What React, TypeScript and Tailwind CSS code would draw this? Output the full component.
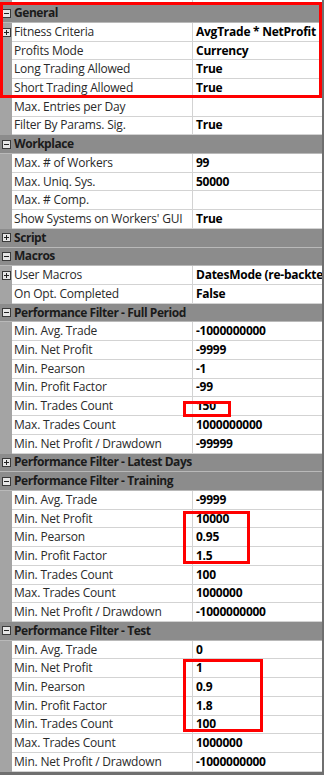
import React from 'react';

type Item =
  | { kind: 'group'; title: string; open: boolean }
  | { kind: 'row'; label: string; value?: string; sub?: boolean };

const items: Item[] = [
  { kind: 'group', title: 'General', open: true },
  { kind: 'row', label: 'Fitness Criteria', value: 'AvgTrade * NetProfit', sub: true },
  { kind: 'row', label: 'Profits Mode', value: 'Currency' },
  { kind: 'row', label: 'Long Trading Allowed', value: 'True' },
  { kind: 'row', label: 'Short Trading Allowed', value: 'True' },
  { kind: 'row', label: 'Max. Entries per Day' },
  { kind: 'row', label: 'Filter By Params. Sig.', value: 'True' },
  { kind: 'group', title: 'Workplace', open: true },
  { kind: 'row', label: 'Max. # of Workers', value: '99' },
  { kind: 'row', label: 'Max. Uniq. Sys.', value: '50000' },
  { kind: 'row', label: 'Max. # Comp.' },
  { kind: 'row', label: "Show Systems on Workers' GUI", value: 'True' },
  { kind: 'group', title: 'Script', open: false },
  { kind: 'group', title: 'Macros', open: true },
  { kind: 'row', label: 'User Macros', value: 'DatesMode (re-backtes', sub: true },
  { kind: 'row', label: 'On Opt. Completed', value: 'False' },
  { kind: 'group', title: 'Performance Filter - Full Period', open: true },
  { kind: 'row', label: 'Min. Avg. Trade', value: '-1000000000' },
  { kind: 'row', label: 'Min. Net Profit', value: '-9999' },
  { kind: 'row', label: 'Min. Pearson', value: '-1' },
  { kind: 'row', label: 'Min. Profit Factor', value: '-99' },
  { kind: 'row', label: 'Min. Trades Count', value: '150' },
  { kind: 'row', label: 'Max. Trades Count', value: '1000000000' },
  { kind: 'row', label: 'Min. Net Profit / Drawdown', value: '-99999' },
  { kind: 'group', title: 'Performance Filter - Latest Days', open: false },
  { kind: 'group', title: 'Performance Filter - Training', open: true },
  { kind: 'row', label: 'Min. Avg. Trade', value: '-9999' },
  { kind: 'row', label: 'Min. Net Profit', value: '10000' },
  { kind: 'row', label: 'Min. Pearson', value: '0.95' },
  { kind: 'row', label: 'Min. Profit Factor', value: '1.5' },
  { kind: 'row', label: 'Min. Trades Count', value: '100' },
  { kind: 'row', label: 'Max. Trades Count', value: '1000000' },
  { kind: 'row', label: 'Min. Net Profit / Drawdown', value: '-1000000000' },
  { kind: 'group', title: 'Performance Filter - Test', open: true },
  { kind: 'row', label: 'Min. Avg. Trade', value: '0' },
  { kind: 'row', label: 'Min. Net Profit', value: '1' },
  { kind: 'row', label: 'Min. Pearson', value: '0.9' },
  { kind: 'row', label: 'Min. Profit Factor', value: '1.8' },
  { kind: 'row', label: 'Min. Trades Count', value: '100' },
  { kind: 'row', label: 'Max. Trades Count', value: '1000000' },
  { kind: 'row', label: 'Min. Net Profit / Drawdown', value: '-1000000000' },
];

const Toggle = ({ open }: { open: boolean }) => (
  <svg width="9" height="9" viewBox="0 0 9 9" className="shrink-0">
    <rect x="0.5" y="0.5" width="8" height="8" fill="#e6e6e6" stroke="#3a3a3a" />
    <path d="M2 4.5h5" stroke="#222" />
    {!open && <path d="M4.5 2v5" stroke="#222" />}
  </svg>
);

export default function App() {
  return (
    <div className="relative w-[324px] h-[775px] overflow-hidden bg-[#6f6f6f] font-['Open_Sans',sans-serif] text-[12px]">
      <div className="flex flex-col w-[322px] bg-white">
        {/* tail of the row above */}
        <div className="flex h-[4.26px]">
          <div className="w-[12px] bg-[#a4a4a4]" />
          <div className="w-[181px] bg-white border-r border-[#cfcfcf]" />
          <div className="flex-1 bg-white" />
        </div>

        {items.map((it, i) =>
          it.kind === 'group' ? (
            <div key={i} className="flex items-center h-[18.72px] bg-[#8c8c8c] border-b border-[#b9b9b9]">
              <div className="w-[12px] flex justify-center">
                <Toggle open={it.open} />
              </div>
              <span className="pl-[2px] font-bold tracking-[-0.45px] text-[#1b1b1b] whitespace-nowrap">{it.title}</span>
            </div>
          ) : (
            <div key={i} className="flex h-[18.72px]">
              <div className="w-[12px] bg-[#a4a4a4] flex items-center justify-center">
                {it.sub && <Toggle open={false} />}
              </div>
              <div className="w-[181px] flex items-center pl-[2px] bg-white border-r border-b border-[#d3d3d3] text-[#2a2a2a] tracking-[-0.2px] whitespace-nowrap overflow-hidden">
                {it.label}
              </div>
              <div className="flex-1 flex items-center pl-[3px] bg-white border-b border-[#d3d3d3] font-bold text-black tracking-[-0.25px] whitespace-nowrap overflow-hidden">
                {it.value}
              </div>
            </div>
          )
        )}
      </div>

      {/* red annotation frames */}
      <div className="absolute left-0 top-[2px] w-[322px] h-[96px] border-[3px] border-[#ff0000]" />
      <div className="absolute left-[183px] top-[401px] w-[48px] h-[16px] border-[3px] border-[#ff0000]" />
      <div className="absolute left-[183px] top-[511px] w-[67px] h-[53px] border-[3px] border-[#ff0000]" />
      <div className="absolute left-[183px] top-[659px] w-[80px] h-[73px] border-[3px] border-[#ff0000]" />
    </div>
  );
}
